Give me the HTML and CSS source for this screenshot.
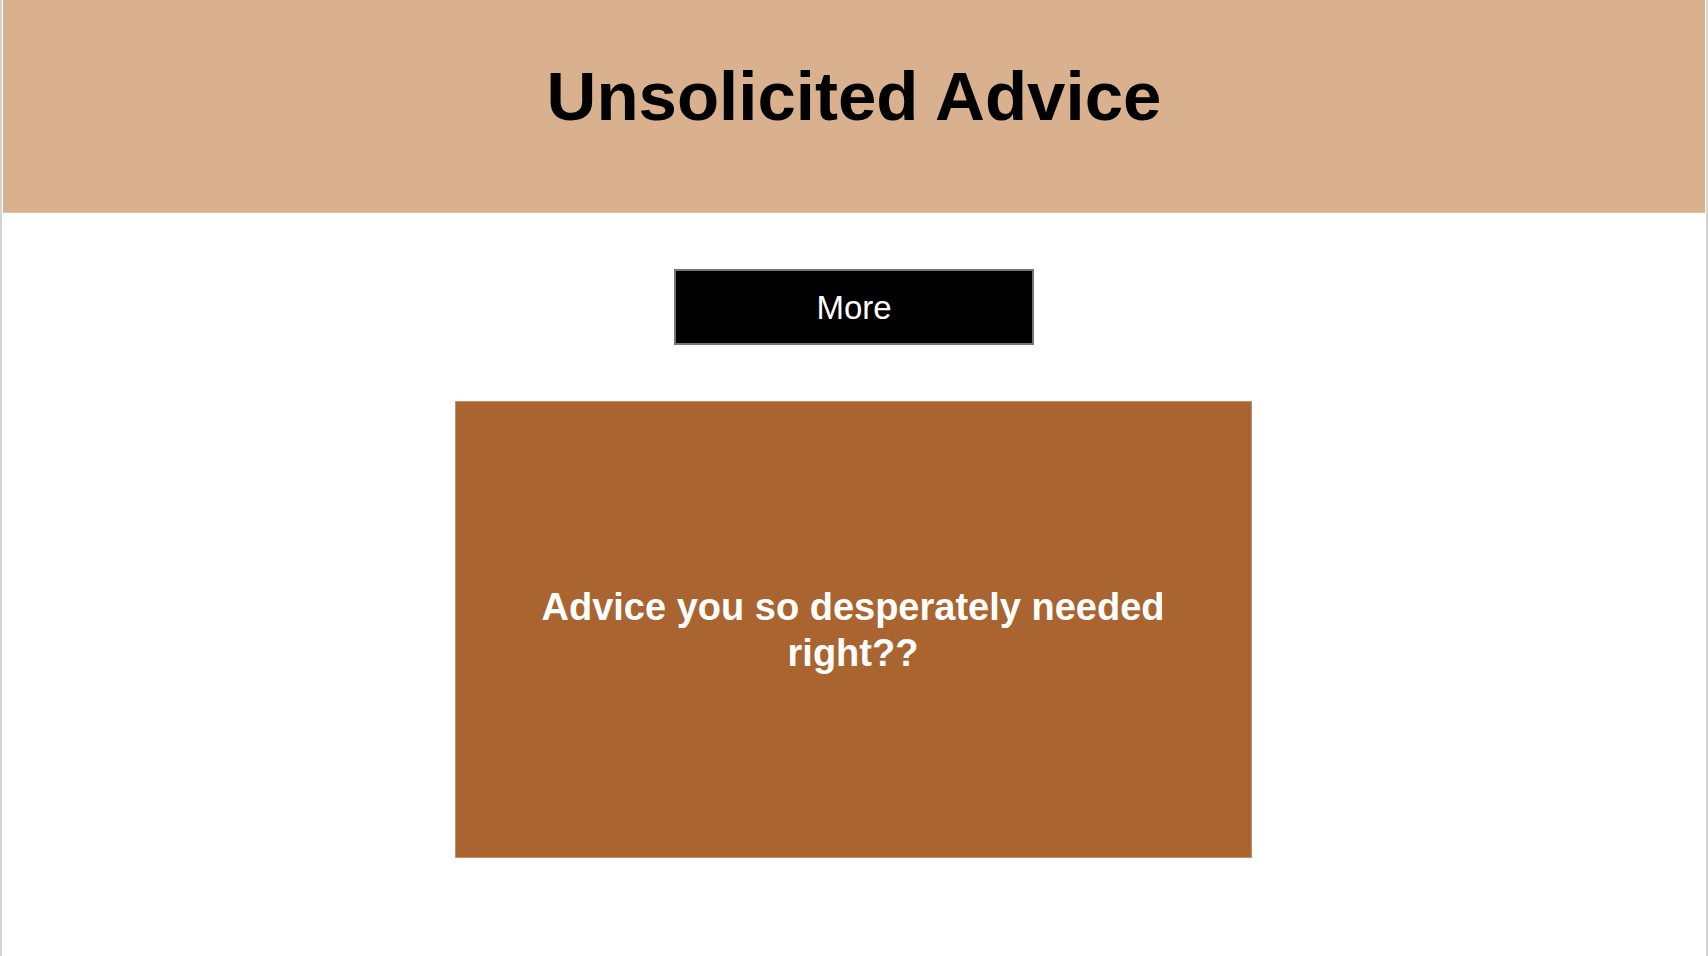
FILE: index.html
```html
<!DOCTYPE html>
<html>
<head>
<meta charset="utf-8">
<title>Unsolicited Advice</title>
<link rel="stylesheet" href="styles.css">
</head>
<body>
<div class="page">
    <header class="banner">
        <h1>Unsolicited Advice</h1>
    </header>
    <main class="content">
        <button class="more-btn">More</button>
        <div class="advice-card">
            <p>Advice you so desperately needed right??</p>
        </div>
    </main>
</div>
</body>
</html>
```

FILE: styles.css
```css
html, body {
    margin: 0;
    height: 100%;
}

body {
    background-color: #fff;
    font-family: "Liberation Sans", Arial, sans-serif;
}

.page {
    box-sizing: border-box;
    min-height: 100%;
    border-left: 2px solid #d4d4d4;
    border-right: 2px solid #d4d4d4;
    padding: 0 1px;
}

.banner {
    box-sizing: border-box;
    height: 213px;
    background-color: #dab18e;
    border-bottom: 1px solid #e6c2a2;
    padding-top: 58px;
    text-align: center;
}

.banner h1 {
    margin: 0;
    font-size: 69px;
    line-height: 78px;
    font-weight: bold;
    color: #000;
}

.content {
    display: flex;
    flex-direction: column;
    align-items: center;
    gap: 56px;
    padding-top: 56px;
}

.more-btn {
    box-sizing: border-box;
    width: 360px;
    height: 76px;
    background-color: #000;
    color: #fff;
    border: 2px solid #767676;
    font-family: "Liberation Sans", Arial, sans-serif;
    font-size: 33px;
    padding: 2px 0 0;
    cursor: pointer;
}

.advice-card {
    box-sizing: border-box;
    width: 797px;
    height: 457px;
    margin-right: 2px;
    background-color: #a96430;
    border: 1px solid #c0926c;
    display: flex;
    align-items: center;
    justify-content: center;
    padding: 0 60px;
}

.advice-card p {
    margin: 0;
    color: #fff;
    font-size: 38px;
    font-weight: bold;
    line-height: 46px;
    text-align: center;
}
```
